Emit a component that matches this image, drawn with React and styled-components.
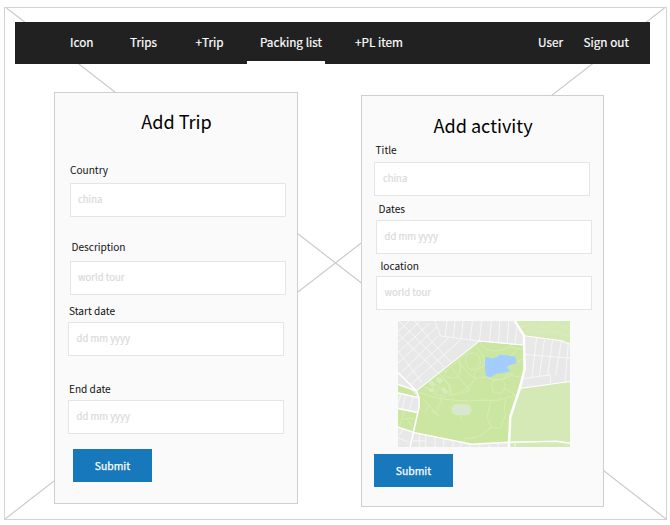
import React from "react";
import styled, { createGlobalStyle } from "styled-components";

const GlobalStyle = createGlobalStyle`
  *, *::before, *::after { box-sizing: border-box; }
  body {
    margin: 0;
    background: #fff;
    color: #111;
    font-family: "Noto Sans CJK SC", "Noto Sans", sans-serif;
  }
`;

const Page = styled.div`
  width: 670px;
  height: 525px;
  padding: 7px 0 0 4px;
  overflow: hidden;
`;

const Frame = styled.div`
  position: relative;
  width: 663px;
  height: 513px;
  padding: 14px 0 0 10px;
  border: 1px solid #d3d3d3;
`;

const Diagonals = styled.svg`
  position: absolute;
  inset: 0;
  width: 100%;
  height: 100%;
  stroke: #cbcbcb;
  stroke-width: 1.2;
`;

const Header = styled.header`
  position: relative;
  display: flex;
  width: 635px;
  height: 42px;
  padding-left: 55px;
  background: #212121;
`;

const NavItem = styled.a`
  position: relative;
  flex: 0 0 ${(p) => p.$width}px;
  color: #fff;
  font-size: 11.75px;
  font-weight: 400;
  line-height: 39px;
  white-space: nowrap;
  -webkit-text-stroke: 0.2px #fff;

  ${(p) =>
    p.$active &&
    `&::after {
      content: "";
      position: absolute;
      left: -13px;
      bottom: 0;
      width: 78px;
      height: 3px;
      background: #fff;
    }`}
`;

const Cards = styled.main`
  position: relative;
  display: flex;
  align-items: flex-start;
  gap: 63px;
  padding: 28px 0 0 39px;
`;

const Card = styled.form`
  width: ${(p) => p.$width}px;
  height: ${(p) => p.$height}px;
  margin-top: ${(p) => p.$drop || 0}px;
  border: 1px solid #cfcfcf;
  background: #fafafa;
`;

const Title = styled.h1`
  margin: ${(p) => p.$top}px 0 0;
  padding-left: 1px;
  font-size: 18.1px;
  font-weight: 400;
  line-height: 28px;
  text-align: center;
  color: #000;
`;

const Field = styled.div`
  display: flex;
  flex-direction: column;
  gap: ${(p) => p.$gap}px;
  margin: ${(p) => p.$top}px 0 0 ${(p) => p.$left}px;
`;

const Label = styled.label`
  padding-left: ${(p) => p.$indent}px;
  font-size: 10.1px;
  line-height: 16px;
  color: #111;
`;

const Input = styled.div`
  width: 216px;
  height: ${(p) => p.$height || 34}px;
  padding-left: 7.5px;
  border: 1px solid #e5e5e5;
  background: #fff;
  color: #dadada;
  font-size: 9.5px;
  line-height: 31px;
  -webkit-text-stroke: 0.2px #dadada;
`;

const Submit = styled.button`
  display: block;
  width: 79px;
  height: 33px;
  margin: ${(p) => p.$top}px 0 0 ${(p) => p.$left}px;
  padding: 0;
  border: 0;
  background: #1878bc;
  color: #fff;
  font: 400 10.4px/33px "Noto Sans CJK SC", "Noto Sans", sans-serif;
  -webkit-text-stroke: 0.25px #fff;
`;

const MapImage = styled.svg`
  display: block;
  width: 172px;
  height: 126px;
  margin: 11px 0 0 36px;
`;

const navItems = [
  ["Icon", 60],
  ["Trips", 65.5],
  ["+Trip", 64.5],
  ["Packing list", 95],
  ["+PL item", 183],
  ["User", 45.5],
  ["Sign out", 50],
];

const tripFields = [
  { label: "Country", hint: "china", top: 27, left: 14.5, indent: 0.5, gap: 5 },
  { label: "Description", hint: "world tour", top: 22, left: 14.5, indent: 2, gap: 6 },
  { label: "Start date", hint: "dd mm yyyy", top: 8, left: 13, indent: 1, gap: 3 },
  { label: "End date", hint: "dd mm yyyy", top: 25, left: 13, indent: 1, gap: 3 },
];

const activityFields = [
  { label: "Title", hint: "china", top: 3, left: 12.4, indent: 1.2, gap: 4 },
  { label: "Dates", hint: "dd mm yyyy", top: 5, left: 14, indent: 2.5, gap: 3 },
  { label: "location", hint: "world tour", top: 4, left: 14, indent: 4.5, gap: 2 },
];

function Fields({ items }) {
  return items.map((f) => (
    <Field key={f.label} $top={f.top} $left={f.left} $gap={f.gap}>
      <Label $indent={f.indent}>{f.label}</Label>
      <Input>{f.hint}</Input>
    </Field>
  ));
}

function ParkMap() {
  return (
    <MapImage viewBox="25 27 515 377" preserveAspectRatio="none" fill="none" strokeLinejoin="round">
      <path fill="#e8e8e8" d="M25 27H540V404H25Z" />
      <path fill="#d5e9b7" d="M375 27H540V97L515 86L402 71ZM394 228L540 208V404H358L360 315Z" />
      <path fill="#cae6a1" d="M268 87L402 99V171L360 310L357 390L245 395L75 361L88 285V257L80 236ZM25 217L60 229L84 256L25 242ZM25 290L83 301L75 361L25 346Z" />
      <g stroke="#fafafa" strokeWidth="2.4">
        <path d="M25 60L58 27M25 90L91 27M25 121L120 34M25 153L141 45M35 181L150 68M48 199L178 75M62 218L215 81M29 27L165 166M75 27L139 103L184 151M25 64L143 182M25 117L97 211" />
        <path d="M135 27L153 72L268 87L402 99M172 27L166 74M196 27L190 77M220 27L214 80M248 27L241 84M275 27L269 87M304 27L299 90M330 27L326 92M356 27L352 95M381 43L375 97" />
        <path d="M402 127L540 138M440 77L426 196M464 79L448 193M488 82L473 190M514 87L497 189M535 92L525 211M481 188V214M402 199L481 188M25 273L35 244M48 247L37 294M70 254L58 296M25 376L57 390M40 351L30 367M90 364V404M108 367V404M136 373V404M162 378V404M190 384V404M214 389V404M240 394V404M270 397V404M298 396V404M325 394V404M70 385L108 386M375 392V404" />
      </g>
      <g stroke="#daedbb" strokeWidth="2.5">
        <path d="M268 87Q255 103 237 119M268 87Q285 123 327 116L362 104L402 113M258 103Q292 139 283 160M237 119L209 142L171 175L147 184M232 127Q220 148 237 169Q259 180 270 158Q276 127 252 122ZM202 146L238 186L257 199M185 165L205 193L239 233L218 244M171 175L161 199L180 216L186 249M147 184L177 219L180 251M122 207L149 226L133 246L170 254M101 224L128 233M84 239L130 255Q209 271 275 264L326 264L377 249M257 199Q226 245 185 249M209 142Q216 173 205 193Q194 201 171 195M285 160Q242 181 257 199L289 194L311 203L342 200L363 190L402 196M310 205Q300 232 316 241Q333 249 343 232Q350 210 334 202ZM343 227L377 249M342 200L350 186L371 184M379 151L402 138M361 132L380 115M303 264L292 315L304 345L296 351L268 372L246 377M347 262Q340 285 347 309L331 349L304 345M102 261L147 311M152 270L138 304L126 296M120 281L104 300M214 307V323M221 391L229 376L252 379M151 255L156 274M43 296L36 325L25 346M36 320L75 318M51 319L75 352" />
        <path d="M378 38Q405 53 429 28M407 55L423 41L465 44L500 39L540 51M405 64L426 47L445 65L475 51L500 60L540 75M450 27L459 44L485 50L510 27" />
      </g>
      <path fill="#d8ebba" d="M116 210L127 204L137 219L127 224ZM139 196L151 195L160 207L151 215L140 208ZM120 229L138 228L129 242L115 236ZM152 228L165 225L175 240L165 248Z" />
      <path fill="#a4cdff" d="M286 137Q294 132 303 139L319 136L329 128L355 130L376 134L381 153L355 161L351 167L362 176L342 182L320 185L306 193Q296 199 288 190L285 164Z" />
      <rect x="186" y="277" width="58" height="31" rx="14" fill="#d9e7d1" stroke="#d7edba" strokeWidth="2" />
      <g stroke="#fff" strokeWidth="4.5">
        <path d="M25 181L80 236L88 256V285L61 404M80 236L25 217M84 256L25 242M83 301L25 289M25 345L75 361L245 396L357 390L500 387L540 393" />
        <path strokeWidth="3" d="M80 236L268 87L402 99M402 71L515 86L540 97M394 228L540 208" />
        <path strokeWidth="7.5" d="M375 27L402 71L404 171L390 228L361 315L357 404" />
      </g>
    </MapImage>
  );
}

export default function App() {
  return (
    <>
      <GlobalStyle />
      <Page>
        <Frame>
          <Diagonals viewBox="0 0 661 511" preserveAspectRatio="none" aria-hidden="true">
            <path d="M1.5 0L661 511M659.5 0L0 511" />
          </Diagonals>
          <Header>
            {navItems.map(([text, width]) => (
              <NavItem key={text} $width={width} $active={text === "Packing list"}>
                {text}
              </NavItem>
            ))}
          </Header>
          <Cards>
            <Card $width={244} $height={412}>
              <Title $top={14}>Add Trip</Title>
              <Fields items={tripFields} />
              <Submit type="button" $top={15} $left={18}>Submit</Submit>
            </Card>
            <Card $width={243} $height={412} $drop={3}>
              <Title $top={15}>Add activity</Title>
              <Fields items={activityFields} />
              <ParkMap />
              <Submit type="button" $top={7} $left={12}>Submit</Submit>
            </Card>
          </Cards>
        </Frame>
      </Page>
    </>
  );
}
